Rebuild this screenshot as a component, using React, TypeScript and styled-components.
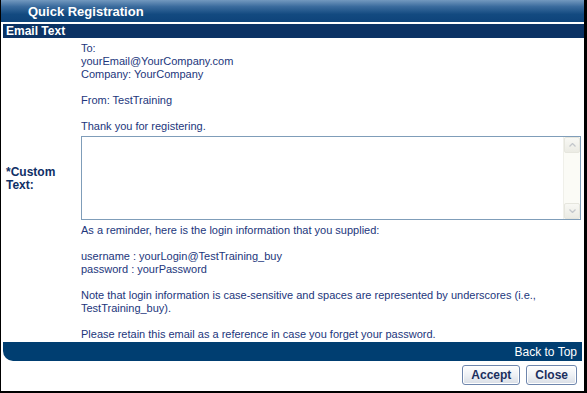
import { ReactElement } from 'react'
import styled, { createGlobalStyle } from 'styled-components'

const GlobalStyle = createGlobalStyle`
  html, body {
    margin: 0;
    padding: 0;
    background: #ffffff;
  }
  body {
    font-family: "Liberation Sans", Arial, sans-serif;
  }
`

const Frame = styled.div`
  width: 587px;
  height: 393px;
  box-sizing: border-box;
  border-left: 1px solid #000;
  border-right: 3px solid #000;
  border-bottom: 2px solid #000;
  display: flex;
  flex-direction: column;
  background: #fff;
`

const TitleBar = styled.div`
  height: 22px;
  flex: none;
  display: flex;
  align-items: center;
  padding-left: 27px;
  background: linear-gradient(to bottom, #7399bf 0%, #3a6b9d 30%, #134a80 65%, #0e437a 100%);
  color: #fff;
  font-weight: bold;
  font-size: 13px;
`

const SectionBar = styled.div`
  height: 14px;
  flex: none;
  margin: 2px 0 0 2px;
  padding-left: 3px;
  display: flex;
  align-items: center;
  background: #0b3264;
  color: #fff;
  font-weight: bold;
  font-size: 12px;
`

const Body = styled.div`
  flex: 1;
  display: grid;
  grid-template-columns: 80px 1fr;
  align-content: start;
  padding-top: 2px;
  color: #22367c;
  font-size: 11px;
  line-height: 13px;
`

const Label = styled.div`
  padding: 5px 0 0 5px;
  align-self: center;
  color: #0f2f66;
  font-weight: bold;
  font-size: 12px;
  line-height: 13px;
`

const Lines = styled.div<{ $top?: number }>`
  grid-column: 2;
  margin-top: ${p => p.$top ?? 0}px;
  padding-top: 2px;
  white-space: pre-line;
  min-height: 13px;
`

const TextBox = styled.div`
  margin: 3px 3px 0 0;
  height: 84px;
  box-sizing: border-box;
  border: 1px solid #7f9db9;
  display: flex;
`

const Area = styled.textarea`
  flex: 1;
  border: none;
  outline: none;
  resize: none;
  padding: 2px;
  font-family: "Liberation Sans", Arial, sans-serif;
  font-size: 11px;
`

const Scroll = styled.div`
  width: 16px;
  flex: none;
  display: flex;
  flex-direction: column;
  justify-content: space-between;
  background: #fbfbf6;
  border-left: 1px solid #f0f0ea;
`

const ScrollButton = styled.div`
  height: 16px;
  box-sizing: border-box;
  border: 1px solid #e6e6de;
  border-radius: 2px;
  background: linear-gradient(to bottom, #f8f8f4, #ebebe4);
  display: flex;
  align-items: center;
  justify-content: center;
`

const BottomBar = styled.div`
  height: 19px;
  flex: none;
  margin: 0 2px;
  padding-right: 5px;
  display: flex;
  align-items: center;
  justify-content: flex-end;
  background: #003e71;
  border-bottom-left-radius: 10px;
  color: #fff;
  font-size: 12px;
`

const Actions = styled.div`
  height: 28px;
  flex: none;
  display: flex;
  align-items: center;
  justify-content: flex-end;
  gap: 6px;
  padding: 0 7px 2px 0;
`

const Button = styled.button`
  height: 20px;
  padding: 0 8px;
  border: 1px solid #6e86ad;
  border-radius: 3px;
  background: linear-gradient(to bottom, #ffffff 0%, #eef1f5 50%, #d9dee6 100%);
  color: #1b2f5e;
  font-family: "Liberation Sans", Arial, sans-serif;
  font-weight: bold;
  font-size: 12px;
  box-shadow: inset 0 0 0 1px #ffffff;
`

const Chevron = ({ up }: { up?: boolean }) => (
  <svg width="7" height="4" viewBox="0 0 7 4">
    <path d={up ? 'M0.5 3.5 L3.5 0.5 L6.5 3.5' : 'M0.5 0.5 L3.5 3.5 L6.5 0.5'} fill="none" stroke="#c3c7cc" strokeWidth="1.3" />
  </svg>
)

export default function App(): ReactElement {
  return (
    <>
      <GlobalStyle />
      <Frame>
        <TitleBar>Quick Registration</TitleBar>
        <SectionBar>Email Text</SectionBar>
        <Body>
          <Lines>{'To:\nyourEmail@YourCompany.com\nCompany: YourCompany\n\u00a0\nFrom: TestTraining\n\u00a0\nThank you for registering.'}</Lines>
          <Label>*Custom<br />Text:</Label>
          <TextBox>
            <Area />
            <Scroll>
              <ScrollButton><Chevron up /></ScrollButton>
              <ScrollButton><Chevron /></ScrollButton>
            </Scroll>
          </TextBox>
          <Lines $top={2}>
            {'As a reminder, here is the login information that you supplied:\n\u00a0\nusername : yourLogin@TestTraining_buy\npassword : yourPassword\n\u00a0\nNote that login information is case-sensitive and spaces are represented by underscores (i.e., TestTraining_buy).\n\u00a0\nPlease retain this email as a reference in case you forget your password.'}
          </Lines>
        </Body>
        <BottomBar>Back to Top</BottomBar>
        <Actions>
          <Button>Accept</Button>
          <Button>Close</Button>
        </Actions>
      </Frame>
    </>
  )
}
